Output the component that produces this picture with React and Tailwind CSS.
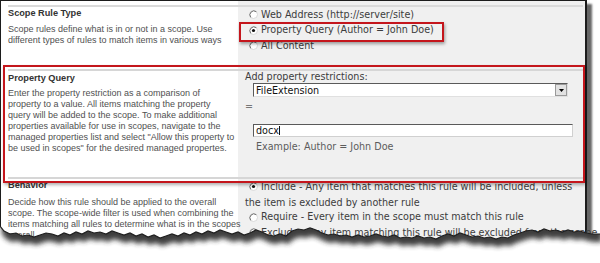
import React from 'react';

const EDGE = [
  [0, 226], [4, 231], [10, 234], [16, 233], [22, 236], [28, 235], [34, 237], [40, 235], [46, 233], [52, 234],
  [58, 236], [64, 233], [70, 235], [76, 232], [82, 234], [88, 231], [94, 233], [100, 232], [106, 234], [112, 231],
  [118, 233], [124, 235], [130, 233], [136, 236], [142, 234], [148, 237], [154, 235], [160, 238], [166, 236], [172, 234],
  [178, 236], [184, 233], [190, 235], [196, 232], [202, 234], [208, 231], [214, 233], [220, 230], [226, 232], [232, 234],
  [238, 232], [244, 235], [250, 233], [256, 230], [262, 232], [268, 235], [274, 236], [280, 234], [286, 236], [292, 231],
  [298, 229], [304, 230], [310, 228], [316, 230], [322, 233], [328, 235], [334, 234], [340, 236], [346, 235], [352, 237],
  [358, 235], [364, 237], [370, 236], [376, 234], [382, 236], [388, 237], [394, 235], [400, 238], [406, 237], [412, 238],
  [418, 236], [424, 238], [430, 237], [436, 239], [442, 236], [448, 234], [454, 236], [460, 233], [466, 235], [472, 237],
  [478, 236], [484, 238], [490, 237], [496, 239], [502, 237], [508, 238], [514, 235], [520, 233], [526, 231], [532, 230],
  [538, 232], [544, 229], [550, 231], [556, 230], [562, 232], [568, 230], [574, 232], [580, 231], [586, 233], [592, 234],
  [600, 234],
];

const line = EDGE.map(([x, y], i) => `${i ? 'L' : 'M'}${x},${y}`).join(' ');
const below = `${line} L600,263 L0,263 Z`;
const aboveShifted = EDGE.map(([x, y], i) => `${i ? 'L' : 'M'}${x + 2},${y + 8}`).join(' ') + ' L602,200 L0,200 Z';

const Radio = ({ checked }) => (
  <svg width="9" height="9" viewBox="0 0 9 9" className="shrink-0">
    <circle cx="4.5" cy="4.5" r="4" fill="#fff" stroke="#d8d8d8" />
    <path d="M7.3 1.7 A4 4 0 0 0 1.7 7.3" stroke="#6e6e6e" fill="none" />
    {checked && <circle cx="4.5" cy="4.5" r="1.6" fill="#111" />}
  </svg>
);

const Option = ({ checked, children }) => (
  <div className="flex items-center gap-[3px] h-[15.5px] pl-[11px] whitespace-nowrap">
    <Radio checked={checked} />
    <span>{children}</span>
  </div>
);

// description text, broken where the original page breaks it
const Desc = ({ lines, className = '' }) => (
  <div className={`text-[9px] leading-[11px] text-[#505050] whitespace-nowrap ${className}`}>
    {lines.map((l) => (
      <div key={l}>{l}</div>
    ))}
  </div>
);

const TornEdge = () => (
  <svg width="600" height="63" viewBox="0 200 600 63" className="absolute left-0 top-[200px]">
    <defs>
      <clipPath id="below">
        <path d={below} />
      </clipPath>
      <filter id="soft" x="-5%" y="-50%" width="110%" height="200%">
        <feGaussianBlur stdDeviation="2.6" />
      </filter>
    </defs>
    <path d={below} fill="#fff" />
    <g clipPath="url(#below)">
      <path d={aboveShifted} fill="#2a2a2a" opacity="0.9" filter="url(#soft)" />
    </g>
    <path d={line} fill="none" stroke="#1e1e1e" strokeWidth="1.2" />
  </svg>
);

export default function App() {
  return (
    <div className="relative w-[600px] h-[263px] bg-white overflow-hidden">
      <div className="relative w-[587px] h-[250px] border-t border-l border-r-2 border-[#1c1c1c] bg-[linear-gradient(to_right,#fff_237px,#f0f0f0_237px)] shadow-[5px_4px_2px_rgba(0,0,0,0.6)]">
        {/* Scope Rule Type */}
        <div className="pt-[4px]">
          <div className="ml-[7px] mr-[2px] h-[2px] bg-[#dadada]" />
          <div className="grid grid-cols-[237px_1fr] h-[47px]">
            <div className="pl-[7px] font-['Liberation_Sans',sans-serif]">
              <div className="text-[9.2px] leading-[12px] font-bold text-[#333]">Scope Rule Type</div>
              <Desc
                className="mt-[5px]"
                lines={[
                  'Scope rules define what is in or not in a scope. Use',
                  'different types of rules to match items in various ways',
                ]}
              />
            </div>
            <div className="relative font-['DejaVu_Sans',sans-serif] text-[9.6px] text-[#3c3c3c]">
              <Option>Web Address (http://server/site)</Option>
              <Option checked>Property Query (Author = John Doe)</Option>
              <Option>All Content</Option>
            </div>
          </div>
        </div>

        {/* Property Query */}
        <div className="pt-[15px]">
          <div className="ml-[7px] mr-[2px] h-[2px] bg-[#d6d6d6]" />
          <div className="grid grid-cols-[237px_1fr] h-[106px]">
            <div className="pl-[7px] pt-[1px] font-['Liberation_Sans',sans-serif]">
              <div className="text-[9.2px] leading-[12px] font-bold text-[#333]">Property Query</div>
              <Desc
                className="mt-[4px]"
                lines={[
                  'Enter the property restriction as a comparison of',
                  'property to a value. All items matching the property',
                  'query will be added to the scope. To make additional',
                  'properties available for use in scopes, navigate to the',
                  'managed properties list and select "Allow this property to',
                  'be used in scopes" for the desired managed propertes.',
                ]}
              />
            </div>
            <div className="pl-[7px] font-['DejaVu_Sans',sans-serif] text-[9.6px] leading-[11px] text-[#3c3c3c]">
              <div>Add property restrictions:</div>
              <div className="mt-[1px] ml-[8px] w-[315px] h-[14px] flex items-center bg-white border border-t-[#5a5a5a] border-l-[#5a5a5a] border-r-[#e0e0e0] border-b-[#e0e0e0]">
                <span className="flex-1 pl-[2px] text-[#111]">FileExtension</span>
                <span className="w-[12px] h-[12px] flex items-center justify-center bg-[#e2e2e2] border border-[#9a9a9a]">
                  <svg width="5" height="3" viewBox="0 0 5 3"><path d="M0 0 H5 L2.5 3 Z" fill="#000" /></svg>
                </span>
              </div>
              <div className="mt-[4px] text-[#777]">=</div>
              <div className="mt-[12px] ml-[8px] w-[320px] h-[13px] flex items-center bg-white border border-t-[#5a5a5a] border-l-[#5a5a5a] border-r-[#d0d0d0] border-b-[#d0d0d0]">
                <span className="pl-[2px] text-[#111]">docx</span>
                <span className="w-px h-[9px] bg-[#111]" />
              </div>
              <div className="mt-[4px] ml-[11px] text-[#5c5c5c]">Example: Author = John Doe</div>
            </div>
          </div>
        </div>

        {/* Behavior */}
        <div>
          <div className="ml-[7px] mr-[2px] h-[2px] bg-[#d6d6d6]" />
          <div className="grid grid-cols-[237px_1fr]">
            <div className="pl-[7px] font-['Liberation_Sans',sans-serif]">
              <div className="text-[9.2px] leading-[12px] font-bold text-[#333]">Behavior</div>
              <Desc
                className="mt-[6px]"
                lines={[
                  'Decide how this rule should be applied to the overall',
                  'scope. The scope-wide filter is used when combining the',
                  'items matching all rules to determine what is in the scopes',
                  'overall.',
                ]}
              />
            </div>
            <div className="font-['DejaVu_Sans',sans-serif] text-[9.6px] text-[#3c3c3c]">
              <Option checked>Include - Any item that matches this rule will be included, unless</Option>
              <div className="pl-[7px] h-[15px] leading-[15px] whitespace-nowrap">the item is excluded by another rule</div>
              <Option>Require - Every item in the scope must match this rule</Option>
              <Option>Exclude - Any item matching this rule will be excluded from the scope</Option>
            </div>
          </div>
        </div>

        {/* annotation boxes */}
        <div className="absolute left-[238px] top-[21px] w-[205px] h-[20px] border-2 border-[#c4161c] shadow-[1px_2px_3px_rgba(0,0,0,0.35)]" />
        <div className="absolute left-[2px] top-[64px] w-[582px] h-[118px] border-2 border-[#c4161c] shadow-[1px_2px_3px_rgba(0,0,0,0.3)]" />
      </div>
      <TornEdge />
    </div>
  );
}
